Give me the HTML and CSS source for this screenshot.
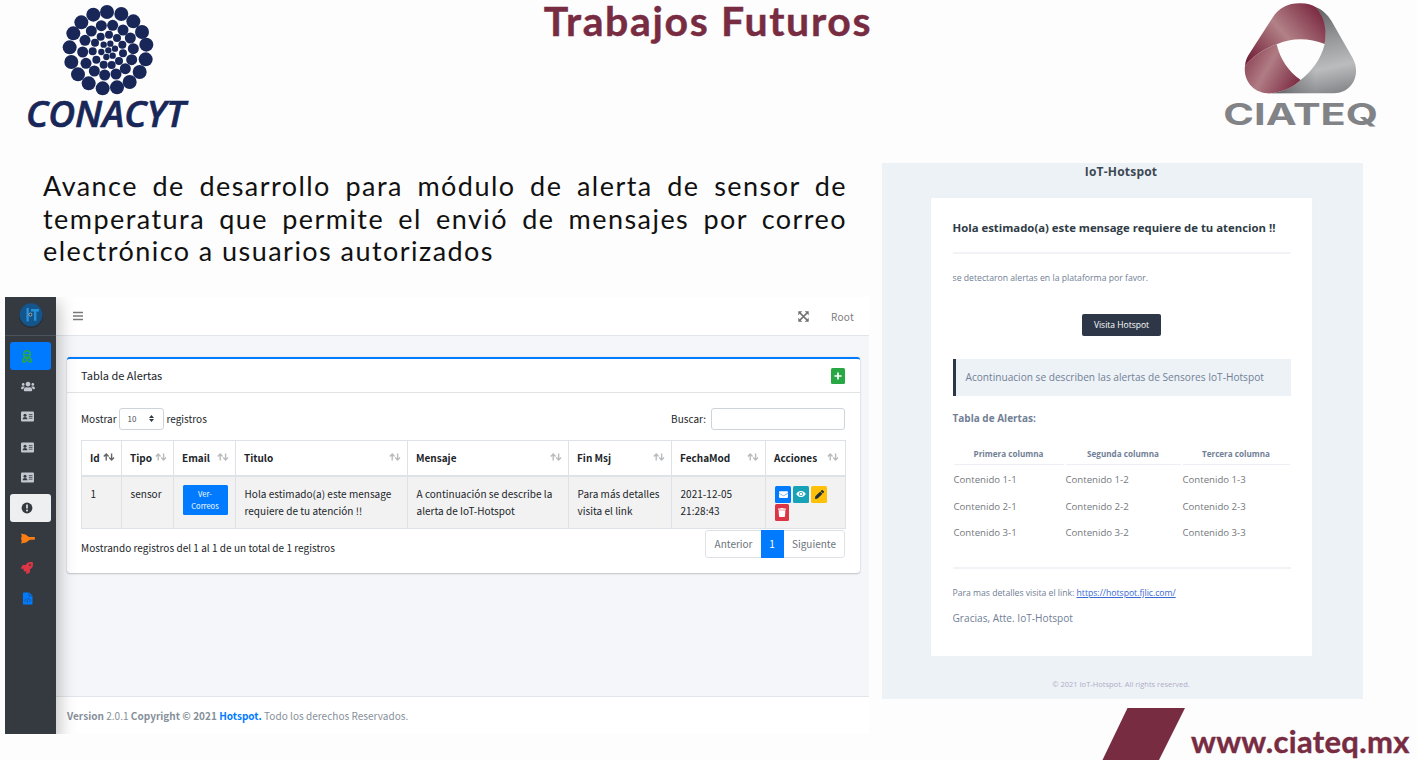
FILE: index.html
```html
<!DOCTYPE html>
<html lang="es">
<head>
<meta charset="utf-8">
<title>Trabajos Futuros</title>
<link rel="stylesheet" href="styles.css">
</head>
<body>
<svg width="0" height="0" class="defs">
  <defs>
    <symbol id="sort" viewBox="0 0 12 8"><path d="M3.2 7.4V1.2M.8 3.5 3.2 1.1 5.6 3.5" class="up"/><path d="M8.6.4v6.4M6.2 4.5l2.4 2.4L11 4.5" class="down"/></symbol>
    <symbol id="idcard" viewBox="0 0 13 11"><rect x="0" y=".4" width="13" height="10.2" rx="1" fill="#c2c7d0"/><circle cx="4" cy="4.2" r="1.5" fill="#343a40"/><path d="M1.6 8.2c0-3 4.8-3 4.8 0z" fill="#343a40"/><path d="M7.8 3.6h3.7M7.8 5.4h3.7M7.8 7.2h3.7" stroke="#343a40" stroke-width=".8"/></symbol>
  </defs>
</svg>

<header class="top">
  <svg class="conacyt" viewBox="0 0 600 420">
    <g fill="#182758">
      <g><circle cx="291" cy="36" r="21"/><circle cx="334" cy="42" r="21"/><circle cx="370" cy="64" r="21"/><circle cx="396" cy="96" r="21"/><circle cx="409" cy="134" r="21"/><circle cx="407" cy="178" r="21"/><circle cx="389" cy="216" r="21"/><circle cx="359" cy="246" r="21"/><circle cx="321" cy="262" r="21"/><circle cx="278" cy="265" r="21"/><circle cx="236" cy="250" r="21"/><circle cx="204" cy="223" r="21"/><circle cx="184" cy="186" r="21"/><circle cx="179" cy="142" r="21"/><circle cx="190" cy="100" r="21"/><circle cx="214" cy="67" r="21"/><circle cx="250" cy="44" r="21"/></g>
      <g><circle cx="274" cy="77" r="16.5"/><circle cx="308" cy="76" r="16.5"/><circle cx="339" cy="90" r="16.5"/><circle cx="361" cy="114" r="16.5"/><circle cx="370" cy="146" r="16.5"/><circle cx="365" cy="179" r="16.5"/><circle cx="346" cy="206" r="16.5"/><circle cx="318" cy="222" r="16.5"/><circle cx="284" cy="225" r="16.5"/><circle cx="253" cy="213" r="16.5"/><circle cx="228" cy="190" r="16.5"/><circle cx="218" cy="156" r="16.5"/><circle cx="225" cy="121" r="16.5"/><circle cx="244" cy="93" r="16.5"/></g>
      <g><circle cx="272" cy="110" r="12"/><circle cx="297" cy="104" r="12"/><circle cx="321" cy="114" r="12"/><circle cx="337" cy="134" r="12"/><circle cx="339" cy="160" r="12"/><circle cx="327" cy="183" r="12"/><circle cx="305" cy="195" r="12"/><circle cx="281" cy="194" r="12"/><circle cx="259" cy="179" r="12"/><circle cx="248" cy="154" r="12"/><circle cx="255" cy="128" r="12"/></g>
      <g><circle cx="281" cy="134" r="9.5"/><circle cx="301" cy="131" r="9.5"/><circle cx="315" cy="146" r="9.5"/><circle cx="308" cy="167" r="9.5"/><circle cx="289" cy="171" r="9.5"/><circle cx="274" cy="156" r="9.5"/><circle cx="295" cy="151" r="9.5"/></g>
      <text x="48" y="380" class="conacyt-word" textLength="478" lengthAdjust="spacingAndGlyphs">CONACYT</text>
    </g>
  </svg>
  <h1>Trabajos Futuros</h1>
  <svg class="ciateq" viewBox="0 0 651 420">
    <defs>
      <linearGradient id="g1" x1="0" y1=".9" x2="1" y2=".2"><stop offset="0" stop-color="#6f1f36"/><stop offset=".12" stop-color="#7f3348"/><stop offset=".52" stop-color="#b28187"/><stop offset="1" stop-color="#7a2840"/></linearGradient>
      <linearGradient id="g2" x1="0" y1=".3" x2="1" y2=".8"><stop offset="0" stop-color="#8d4456"/><stop offset=".4" stop-color="#b07c84"/><stop offset="1" stop-color="#7a2840"/></linearGradient>
      <linearGradient id="g3" x1=".55" y1="0" x2=".75" y2="1"><stop offset="0" stop-color="#5f6163"/><stop offset=".35" stop-color="#929496"/><stop offset=".7" stop-color="#babcbe"/><stop offset="1" stop-color="#85878a"/></linearGradient>
      <linearGradient id="g4" x1="0" y1="0" x2="1" y2="0"><stop offset="0" stop-color="#55575a"/><stop offset="1" stop-color="#6d6f72" stop-opacity="0"/></linearGradient>
    </defs>
    <path d="M348 22C368 30 382 44 394 62L458 174C485 224 456 280 400 280H215C250 275 279 262 302 240C336 212 362 180 374 132C380 90 372 54 348 22Z" fill="url(#g3)"/>
    <path d="M215 280C250 275 279 262 302 240C322 224 336 208 348 190L345 280Z" fill="url(#g4)"/>
    <path d="M135 198C136 184 139 176 146 164L217 54C238 22 266 9 302 10C322 10 335 14 348 22C375 54 381 90 374 132C328 114 278 112 230 133C190 148 158 168 135 198Z" fill="url(#g1)"/>
    <path d="M135 198C158 168 190 148 230 133C240 176 264 214 302 240C279 262 250 275 215 280C165 283 129 246 135 198Z" fill="url(#g2)"/>
    <text x="70" y="376" class="ciateq-word" textLength="464" lengthAdjust="spacingAndGlyphs">CIATEQ</text>
  </svg>
</header>

<main class="cols">
  <section class="left">
    <div class="lead">
      <p>Avance de desarrollo para módulo de alerta de sensor de</p>
      <p>temperatura que permite el envió de mensajes por correo</p>
      <p class="short">electrónico a usuarios autorizados</p>
    </div>

    <div class="app">
      <nav class="side">
        <div class="brand"><svg width="26" height="27" viewBox="0 0 26 27"><circle cx="13" cy="14" r="12" fill="#2a3036"/><circle cx="13" cy="12.8" r="11.5" fill="#14558c"/><path d="M9.6 6v13.4" stroke="#2a95dc" stroke-width="2.200"/><path d="M13 8.300h8M17.200 8.300v10.400" stroke="#2490d8" stroke-width="2.400"/><circle cx="12.400" cy="12.600" r="1.500" fill="#1f2f3d" stroke="#b9cbd8" stroke-width=".8"/></svg></div>
        <ul>
          <li class="on"><svg width="12" height="13" viewBox="0 0 12 13" fill="none" stroke="#28a745" stroke-width="1.500"><circle cx="6" cy="4" r="3.300"/><path d="M3 4.600h6" stroke-width="1"/><path d="M1.700 12c-.2-2.600.8-4 2.800-4.400L6 9l1.500-1.400c2 .4 3 1.800 2.800 4.400M1 11.800h3.200L6 9l1.800 2.800H11"/></svg></li>
          <li><svg width="14" height="11" viewBox="0 0 640 512" fill="#c2c7d0"><path d="M96 224c35.300 0 64-28.700 64-64s-28.700-64-64-64-64 28.700-64 64 28.700 64 64 64zm448 0c35.300 0 64-28.700 64-64s-28.700-64-64-64-64 28.700-64 64 28.700 64 64 64zm32 32h-64c-17.600 0-33.500 7.100-45.100 18.600 40.300 22.100 68.900 62 75.100 109.400h66c17.700 0 32-14.300 32-32v-32c0-35.300-28.700-64-64-64zm-256 0c61.900 0 112-50.100 112-112S381.900 32 320 32 208 82.100 208 144s50.100 112 112 112zm76.800 32h-8.300c-20.800 10-43.900 16-68.500 16s-47.600-6-68.500-16h-8.300C179.600 288 128 339.600 128 403.200V432c0 26.500 21.500 48 48 48h288c26.500 0 48-21.500 48-48v-28.800c0-63.600-51.600-115.200-115.200-115.200zm-223.700-13.400C161.500 263.100 145.600 256 128 256H64c-35.300 0-64 28.700-64 64v32c0 17.700 14.300 32 32 32h65.900c6.300-47.400 34.900-87.300 75.200-109.400z"/></svg></li>
          <li><svg width="13" height="11"><use href="#idcard"/></svg></li>
          <li><svg width="13" height="11"><use href="#idcard"/></svg></li>
          <li><svg width="13" height="11"><use href="#idcard"/></svg></li>
          <li class="hover"><svg width="12" height="12" viewBox="0 0 12 12"><circle cx="6" cy="6" r="5.400" fill="#343a40"/><path d="M6 2.600v4" stroke="#edeff0" stroke-width="1.600"/><circle cx="6" cy="8.600" r="1" fill="#edeff0"/></svg></li>
          <li><svg width="14" height="11" viewBox="0 0 14 11"><path d="M0 .5 4.500 1.600 8 4h5.400c.8.600.8 2.100 0 2.700H9L5 9.500 0 10.500l.8-2.500L0 5.500.8 3z" fill="#fd7e14"/></svg></li>
          <li><svg width="12" height="12" viewBox="0 0 512 512" fill="#dc3545"><path d="M505.120 19.090c-1.190-5.530-6.660-11-12.210-12.180C460.610 0 435.370 0 410.210 0 307 0 245 55.200 199.050 128H94.840c-16.350 0-35.560 11.880-42.880 26.480L2.520 253.290A24 24 0 0 0 24 288h103.840l-22.470 22.470a32 32 0 0 0 0 45.250l50.900 50.910a32 32 0 0 0 45.260 0L224 384.160V488a24 24 0 0 0 34.700 21.490l98.700-49.390c14.630-7.300 26.530-26.500 26.530-42.860V312.790C456.610 266.740 512 204.610 512 101.940c.1-25.240.1-50.400-6.880-82.850zM384 168a40 40 0 1 1 40-40 40 40 0 0 1-40 40z"/></svg></li>
          <li><svg width="13" height="13" viewBox="0 0 12 12"><path d="M2.600.4H7.600L10.600 3.400v7.400q0 .8-.8.800H2.600q-.8 0-.8-.8V1.200q0-.8.800-.8z" fill="#007bff"/><path d="M7.400.4v3.200h3.200M4.800 6 3.300 7.600l1.500 1.600M7.600 6l1.500 1.600-1.500 1.600M6.700 5.600 5.700 9.600" fill="none" stroke="#244f80" stroke-width=".8"/></svg></li>
        </ul>
      </nav>

      <div class="page">
        <div class="bar">
          <svg class="burger" width="10" height="10" viewBox="0 0 10 10"><path d="M0 1.500h10M0 5h10M0 8.500h10" stroke="#77787a" stroke-width="1.500"/></svg>
          <svg class="expand" width="11" height="11" viewBox="0 0 11 11"><path d="M2 2l7 7M9 2 2 9" stroke="#6f7072" stroke-width="1.700"/><path d="M.3.3h4L.3 4.300zM10.700.3v4L6.700.3zM.3 10.700v-4l4 4zM10.700 10.700h-4l4-4z" fill="#6f7072"/></svg>
          <span>Root</span>
        </div>

        <div class="body">
          <div class="card">
            <div class="card-head"><h2>Tabla de Alertas</h2><span class="add"><svg width="8" height="8" viewBox="0 0 8 8"><path d="M4 .4v7.200M.4 4h7.200" stroke="#fff" stroke-width="1.700"/></svg></span></div>
            <div class="tools">
              <span>Mostrar</span><span class="select">10<svg width="5" height="7" viewBox="0 0 5 7"><path d="M2.500 0 5 3H0zM2.500 7 0 4h5z" fill="#343a40"/></svg></span><span>registros</span>
              <span class="find">Buscar:</span><span class="input"></span>
            </div>
            <table class="grid">
              <colgroup><col class="c1"><col class="c2"><col class="c3"><col class="c4"><col class="c5"><col class="c6"><col class="c7"><col class="c8"></colgroup>
              <thead><tr>
                <th class="sorted"><div>Id<svg class="sort"><use href="#sort"/></svg></div></th>
                <th><div>Tipo<svg class="sort"><use href="#sort"/></svg></div></th>
                <th><div>Email<svg class="sort"><use href="#sort"/></svg></div></th>
                <th><div>Titulo<svg class="sort"><use href="#sort"/></svg></div></th>
                <th><div>Mensaje<svg class="sort"><use href="#sort"/></svg></div></th>
                <th><div>Fin Msj<svg class="sort"><use href="#sort"/></svg></div></th>
                <th><div>FechaMod<svg class="sort"><use href="#sort"/></svg></div></th>
                <th><div>Acciones<svg class="sort"><use href="#sort"/></svg></div></th>
              </tr></thead>
              <tbody><tr>
                <td>1</td><td>sensor</td><td><span class="mails">Ver-<br>Correos</span></td>
                <td>Hola estimado(a) este mensage<br>requiere de tu atención !!</td>
                <td>A continuación se describe la<br>alerta de IoT-Hotspot</td>
                <td>Para más detalles<br>visita el link</td>
                <td>2021-12-05<br>21:28:43</td>
                <td><div class="acts">
                  <i class="blue"><svg width="9" height="9" viewBox="0 0 512 512" fill="#fff"><path d="M502.300 190.800c3.900-3.100 9.700-.2 9.700 4.700V400c0 26.500-21.500 48-48 48H48c-26.500 0-48-21.500-48-48V195.600c0-5 5.700-7.800 9.700-4.700 22.400 17.400 52.100 39.500 154.100 113.600 21.100 15.400 56.700 47.800 92.200 47.600 35.700.3 72-32.800 92.300-47.600 102-74.100 131.600-96.300 154-113.700zM256 320c23.200.4 56.600-29.200 73.400-41.400 132.700-96.300 142.800-104.700 173.400-128.700 5.800-4.500 9.200-11.500 9.200-18.900v-19c0-26.500-21.500-48-48-48H48c-26.500 0-48 21.500-48 48v19c0 7.400 3.400 14.300 9.200 18.900 30.600 23.900 40.700 32.400 173.400 128.700 16.800 12.200 50.200 41.800 73.400 41.400z"/></svg></i>
                  <i class="teal"><svg width="10" height="8" viewBox="0 0 10 8"><path d="M.2 4C2.400-.1 7.600-.1 9.800 4 7.600 8.100 2.400 8.100.2 4z" fill="#fff"/><circle cx="5" cy="4" r="2.100" fill="#17a2b8"/><circle cx="5" cy="4" r="1.300" fill="#fff"/></svg></i>
                  <i class="yellow"><svg width="9" height="9" viewBox="0 0 512 512" fill="#1f2d3d"><path d="M497.900 142.100l-46.100 46.100c-4.700 4.700-12.300 4.700-17 0l-111-111c-4.700-4.700-4.700-12.300 0-17l46.100-46.100c18.700-18.700 49.100-18.700 67.900 0l60.100 60.100c18.800 18.700 18.800 49.100 0 67.900zM284.200 99.800L21.600 362.400.4 483.900c-2.900 16.400 11.400 30.600 27.800 27.800l121.500-21.300 262.600-262.600c4.700-4.700 4.700-12.300 0-17l-111-111c-4.800-4.700-12.400-4.700-17.100 0z"/></svg></i>
                  <i class="red"><svg width="8" height="9" viewBox="0 0 448 512" fill="#fff"><path d="M432 32H312l-9.400-18.700A24 24 0 0 0 281.100 0H166.800a23.720 23.720 0 0 0-21.400 13.300L136 32H16A16 16 0 0 0 0 48v32a16 16 0 0 0 16 16h416a16 16 0 0 0 16-16V48a16 16 0 0 0-16-16zM32 128l21.200 339a48 48 0 0 0 47.900 45h245.800a48 48 0 0 0 47.900-45L416 128z"/></svg></i>
                </div></td>
              </tr></tbody>
            </table>
            <div class="foot"><span>Mostrando registros del 1 al 1 de un total de 1 registros</span>
              <div class="pager"><span>Anterior</span><b>1</b><span>Siguiente</span></div></div>
          </div>
        </div>
        <div class="copy"><b>Version</b> 2.0.1 <b>Copyright © 2021 <em>Hotspot.</em></b> Todo los derechos Reservados.</div>
      </div>
    </div>
  </section>

  <section class="right">
    <div class="mail">
      <h3>IoT-Hotspot</h3>
      <div class="sheet">
        <h4>Hola estimado(a) este mensage requiere de tu atencion !!</h4>
        <p class="small">se detectaron alertas en la plataforma por favor.</p>
        <a class="btn">Visita Hotspot</a>
        <blockquote>Acontinuacion se describen las alertas de Sensores IoT-Hotspot</blockquote>
        <h5>Tabla de Alertas:</h5>
        <div class="cells">
          <b>Primera columna</b><b>Segunda columna</b><b>Tercera columna</b>
          <span>Contenido 1-1</span><span>Contenido 1-2</span><span>Contenido 1-3</span>
          <span>Contenido 2-1</span><span>Contenido 2-2</span><span>Contenido 2-3</span>
          <span>Contenido 3-1</span><span>Contenido 3-2</span><span>Contenido 3-3</span>
        </div>
        <p class="small link">Para mas detalles visita el link: <a>https://hotspot.fjlic.com/</a></p>
        <p class="bye">Gracias, Atte. IoT-Hotspot</p>
      </div>
      <p class="legal">© 2021 IoT-Hotspot. All rights reserved.</p>
    </div>
    <footer class="site">
      <svg width="83" height="53" viewBox="0 0 83 53"><path d="M25.500 0H83L56.500 53H0z" fill="#782c42"/></svg>
      <strong>www.ciateq.mx</strong>
    </footer>
  </section>
</main>
</body>
</html>
```

FILE: styles.css
```css
*{box-sizing:border-box}
body{margin:0;width:1417px;height:760px;overflow:hidden;background:#fdfdfd;display:flex;flex-direction:column}
h1,h2,h3,h4,h5,p,ul,blockquote{margin:0;padding:0;font-weight:400}
svg{display:block;flex:none}
.defs{position:absolute}

/* slide header */
.top{height:140px;display:flex;justify-content:space-between;padding-left:10px;flex:none}
.conacyt{width:200px;height:140px}
.ciateq{width:217px;height:140px}
.conacyt-word{font:italic 600 106px "Open Sans",sans-serif;stroke:#182758;stroke-width:2}
.ciateq-word{font:700 88px Inter,sans-serif;fill:#818387}
.top h1{font:700 41px/42px Lato,"Century Gothic",sans-serif;letter-spacing:1.650px;color:#782c42;margin-left:6px;-webkit-text-stroke:.4px #782c42}

.cols{display:flex;flex:1}
.left{width:882px;padding-left:5px;flex:none}
.lead{height:157px;padding:30px 0 0 38px;font:400 27px/32.500px Lato,"Century Gothic",sans-serif;letter-spacing:1.450px;color:#111}
.lead p{width:804px;text-align:justify;text-align-last:justify;white-space:nowrap}
.lead .short{width:451px}

/* admin panel */
.app{width:864px;height:437px;display:flex;overflow:hidden;font:400 10px/17.500px "Noto Sans CJK SC",sans-serif;color:#212529}
.side{width:51px;background:#343a40;z-index:1;box-shadow:0 8px 16px 3px rgba(0,0,0,.25)}
.brand{height:39px;padding:5px 0 0 13px;border-bottom:1px solid #4b545c}
.side ul{list-style:none;padding:6px 5px 0}
.side li{height:28px;margin-bottom:2.350px;border-radius:3px;display:flex;align-items:center;padding-left:11px}
.side .on{background:#007bff}
.side .hover{background:#edeff0}
.page{flex:1;display:flex;flex-direction:column;background:#f4f6f9}
.bar{height:39px;background:#fff;border-bottom:1px solid #e2e5e9;display:flex;align-items:center;padding:0 15px 0 17px;color:#7c7d7e}
.bar .expand{margin-left:auto;margin-right:22px}
.bar span{letter-spacing:.25px;padding-top:1px}
.body{height:360px;padding:21px 9px 0 11px}
.card{height:216px;background:#fff;border-top:2px solid #007bff;border-radius:3px;box-shadow:0 0 1px rgba(0,0,0,.2),0 1px 2px rgba(0,0,0,.2)}
.card-head{height:34px;border-bottom:1px solid #e2e3e4;display:flex;align-items:center;justify-content:space-between;padding:0 15px 0 14px}
.card-head h2{font-size:11px}
.add{width:14px;height:16px;border-radius:1.500px;background:#28a745;display:flex;align-items:center;justify-content:center}
.tools{height:47px;padding:4px 15px 0 14px;display:flex;align-items:center}
.select{width:45px;height:22px;border:1px solid #ced4da;border-radius:3px;margin:0 3px 0 2px;padding:0 9px 0 8px;display:flex;align-items:center;justify-content:space-between;font-size:8px;color:#495057}
.find{margin-left:auto}
.input{width:134px;height:22px;border:1px solid #ced4da;border-radius:3px;margin-left:5px}
.grid{width:764px;margin-left:14px;border-collapse:collapse;table-layout:fixed}
.grid th,.grid td{border:1px solid #dee2e6;text-align:left;vertical-align:top}
.grid th{height:35px;padding:8px 6px 0 8px;border-bottom:2px solid #dee2e6;font-weight:700}
.grid th div{display:flex;justify-content:space-between}
.sort{width:12px;height:8px;margin-top:4px;fill:none;stroke:#b9bbbd;stroke-width:1.400}
.sorted .sort{stroke:#666}
.grid td{height:53px;padding:8px 0 0 8.500px;background:#f2f2f2;white-space:nowrap;letter-spacing:.03px}
.c1{width:40px}.c2{width:52px}.c3{width:62px}.c4{width:172px}.c5{width:161px}.c6{width:103px}.c7{width:94px}.c8{width:80px}
.mails{display:block;width:45px;height:30px;padding-top:3px;border-radius:1.500px;background:#007bff;color:#fff;text-align:center;font-size:7.500px;line-height:12px}
.acts{display:flex;flex-wrap:wrap;gap:1px 2px;margin:1px 0 0 .5px;width:60px}
.acts i{width:16px;height:17px;border-radius:1.500px;display:flex;align-items:center;justify-content:center}
.blue{background:#007bff}.teal{background:#17a2b8}.yellow{background:#ffc107}
.acts .red{background:#dc3545;width:14px}
.foot{display:flex;justify-content:space-between;padding:1px 15px 0 14px}
.foot>span{padding-top:9px;letter-spacing:.03px}
.pager{display:flex;height:28px;border:1px solid #dee2e6;border-radius:3px;line-height:26px;color:#6c757d}
.pager span{padding:0 8px 0 8.500px}
.pager b{width:23px;margin:-1px 0;line-height:28px;background:#007bff;color:#fff;text-align:center;font-weight:400}
.copy{flex:1;background:#fff;border-top:1px solid #e2e5e9;padding:10px 0 0 11px;color:#869099;letter-spacing:.03px}
.copy em{font-style:normal;color:#007bff}

/* mail preview */
.right{flex:1;padding-top:23px;display:flex;flex-direction:column}
.mail{width:481px;height:536px;padding-right:3px;flex:none;background:#edf2f7;font:400 10.130px/16px "Open Sans",sans-serif;color:#718096}
.mail h3{height:35px;padding-top:1px;font-size:12px;font-weight:700;letter-spacing:.2px;text-align:center;color:#3d4852}
.sheet{width:381px;height:458px;margin:0 auto;padding:22px 21px 0 22px;background:#fff;display:flex;flex-direction:column;border-radius:1px;box-shadow:0 0 1px #dde4ec}
.sheet h4{height:34px;font-size:11.350px;font-weight:700;color:#2f3b45;border-bottom:2px solid #f2f3f6;white-space:nowrap}
.small{font-size:8.690px;padding-top:16px}
.btn{align-self:center;width:79px;height:22px;margin-top:28px;border-radius:2px;background:#2d3748;color:#fff;font-size:8.500px;line-height:22px;text-align:center}
.sheet blockquote{height:37px;margin-top:23px;border-left:3px solid #2d3748;background:#edf2f7;padding-left:10px;line-height:37px;white-space:nowrap}
.sheet h5{font-size:10px;font-weight:700;margin-top:14px}
.cells{height:123px;margin-top:20px;padding:0 1px;display:grid;grid-template-columns:110px 115px 107px;column-gap:2px;grid-template-rows:19px 28.500px 26.500px 26.500px;border-bottom:2px solid #f2f3f6;align-content:start}
.cells b{border-bottom:1px solid #edeff5;font-size:8.120px;text-align:center;line-height:16px}
.cells span{font-size:9.650px;line-height:30px;color:#74787e}
.cells span:nth-child(n+7){line-height:26.500px}
.link{letter-spacing:-.02px}
.link a{color:#3869d4;text-decoration:underline}
.bye{margin-top:9px}
.legal{padding-top:20px;font-size:7.530px;text-align:center;color:#b0adc5}

.site{display:flex;margin-top:9px;padding-left:220px}
.site strong{font:700 31px/38px Lato,"Century Gothic",sans-serif;letter-spacing:.3px;color:#782c42;margin:14px 0 0 6px;-webkit-text-stroke:.4px #782c42}
```
